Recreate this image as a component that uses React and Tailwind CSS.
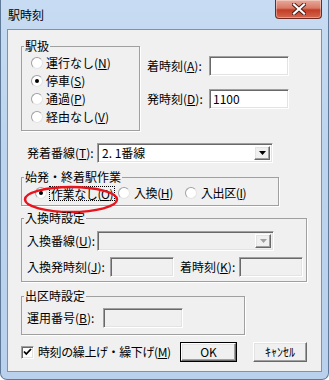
import React from 'react';

const sunken = "border border-t-[#a0a0a0] border-l-[#a0a0a0] border-b-white border-r-white shadow-[inset_1px_1px_0_#696969,inset_-1px_-1px_0_#e3e3e3]";
const raised = "border border-t-white border-l-white border-b-[#696969] border-r-[#696969] shadow-[inset_-1px_-1px_0_#a0a0a0,inset_1px_1px_0_#e3e3e3]";

const Key = ({ k }) => <span className="underline underline-offset-[1px]">{k}</span>;

const Radio = ({ checked }) => (
  <span className="w-[12px] h-[12px] shrink-0 rounded-full bg-white border border-t-[#a0a0a0] border-l-[#a0a0a0] border-b-[#e3e3e3] border-r-[#e3e3e3] flex items-center justify-center">
    {checked && <span className="w-[4px] h-[4px] rounded-full bg-black" />}
  </span>
);

const Field = ({ w, value, disabled }) => (
  <div className={`${w} h-[20px] ${sunken} ${disabled ? 'bg-[#f0f0f0]' : 'bg-white'} flex items-center pl-[3px] leading-none`}>
    {value}
  </div>
);

const Combo = ({ w, value, disabled }) => (
  <div className={`${w} h-[20px] ${sunken} ${disabled ? 'bg-[#f0f0f0]' : 'bg-white'} flex items-center p-[2px]`}>
    <span className="flex-1 pl-[2px] leading-none">{value}</span>
    <span className={`w-[16px] h-full ${raised} bg-[#f0f0f0] flex items-center justify-center`}>
      <svg width="7" height="4" viewBox="0 0 7 4">
        <path d="M0 0h7L3.5 4z" fill={disabled ? '#a0a0a0' : '#000'} />
      </svg>
    </span>
  </div>
);

const Group = ({ title, w, className = '', children }) => (
  <fieldset className={`${w} relative border border-[#a0a0a0] shadow-[1px_1px_0_#fff] ${className}`}>
    <legend className="ml-[2px] px-[1px] leading-[14px]">{title}</legend>
    {children}
  </fieldset>
);

const App = () => {
  return (
    <div className="w-[329px] h-[380px] bg-white font-['Noto_Sans_CJK_JP',sans-serif] text-[12px] text-black">
      <div className="w-full h-full flex flex-col rounded-b-[7px] border-x border-b border-[#5f7a99] bg-[linear-gradient(180deg,#c7dcf2_0%,#bcd4ee_40%,#b9d1ec_100%)]">
        {/* title bar */}
        <div className="h-[29px] flex items-start shrink-0">
          <span className="pl-[7px] pt-[8px] text-[12px] leading-[14px] text-black">駅時刻</span>
          <div className="ml-auto mr-[6px] w-[47px] h-[19px] rounded-b-[4px] border border-t-0 border-[#6d2a22] bg-[linear-gradient(180deg,#e9a99a_0%,#d77a66_45%,#c43c25_55%,#d3684f_100%)] flex items-center justify-center shadow-[inset_0_0_0_1px_rgba(255,255,255,0.35)]">
            <svg width="14" height="12" viewBox="0 0 14 12">
              <path d="M2 1.5L12 10.5M12 1.5L2 10.5" stroke="#4a1a14" strokeWidth="4" strokeLinecap="square" />
              <path d="M2 1.5L12 10.5M12 1.5L2 10.5" stroke="#fff" strokeWidth="2.2" strokeLinecap="square" />
            </svg>
          </div>
        </div>

        {/* client area */}
        <div className="mx-[6px] h-[343px] border border-[#7d93ad] bg-[#f0f0f0] flex flex-col pl-[13px]">
          {/* station handling + times */}
          <div className="flex items-start mt-[9px]">
            <Group title="駅扱" w="w-[119px]">
              <div className="pt-[1px] pb-[4px] flex flex-col">
                {[
                  ['運行なし', 'N', false],
                  ['停車', 'S', true],
                  ['通過', 'P', false],
                  ['経由なし', 'V', false],
                ].map(([t, k, c]) => (
                  <div key={k} className="h-[18px] flex items-center pl-[9px] gap-[3px]">
                    <Radio checked={c} />
                    <span className="whitespace-nowrap">{t}(<Key k={k} />)</span>
                  </div>
                ))}
              </div>
            </Group>
            <div className="ml-[7px] pt-[17px] flex flex-col gap-[13px]">
              <div className="flex items-center">
                <span className="w-[62px]">着時刻(<Key k="A" />):</span>
                <Field w="w-[80px]" />
              </div>
              <div className="flex items-center">
                <span className="w-[62px]">発時刻(<Key k="D" />):</span>
                <Field w="w-[80px]" value="1100" />
              </div>
            </div>
          </div>

          {/* track */}
          <div className="mt-[12px] flex items-center pl-[6px]">
            <span className="w-[70px]">発着番線(<Key k="T" />):</span>
            <Combo w="w-[176px]" value="2. 1番線" />
          </div>

          {/* origin / terminal work */}
          <Group title="始発・終着駅作業" w="w-[258px]" className="mt-[7px]">
            <div className="h-[18px] mb-[3px] flex items-center pl-[13px] tracking-[-0.4px]">
              <div className="w-[83px] min-w-0 shrink-0 flex items-center gap-[3px]">
                <Radio checked />
                <span className="whitespace-nowrap outline outline-1 outline-dotted outline-black leading-[13px] px-[1px]">作業なし(<Key k="O" />)</span>
              </div>
              <div className="w-[67px] min-w-0 shrink-0 flex items-center gap-[4px]">
                <Radio />
                <span className="whitespace-nowrap">入換(<Key k="H" />)</span>
              </div>
              <div className="flex items-center gap-[4px]">
                <Radio />
                <span className="whitespace-nowrap">入出区(<Key k="I" />)</span>
              </div>
            </div>
            <svg className="absolute left-[2px] top-[2px] overflow-visible" width="94" height="27" viewBox="0 0 94 27">
              <ellipse cx="47" cy="13.5" rx="46" ry="12.5" fill="none" stroke="#e8141c" strokeWidth="2.5" />
            </svg>
          </Group>

          {/* shunting settings */}
          <Group title="入換時設定" w="w-[286px]" className="mt-[5px]">
            <div className="pt-[6px] pb-[4px] pl-[5px] flex flex-col gap-[6px]">
              <div className="flex items-center">
                <span className="w-[70px]">入換番線(<Key k="U" />):</span>
                <Combo w="w-[177px]" disabled />
              </div>
              <div className="flex items-center">
                <span className="w-[83px]">入換発時刻(<Key k="J" />):</span>
                <Field w="w-[64px]" disabled />
                <span className="w-[59px] ml-[6px]">着時刻(<Key k="K" />):</span>
                <Field w="w-[64px]" disabled />
              </div>
            </div>
          </Group>

          {/* depot departure */}
          <Group title="出区時設定" w="w-[224px]" className="mt-[7px]">
            <div className="pt-[5px] pb-[6px] pl-[5px] flex items-center">
              <span className="w-[76px]">運用番号(<Key k="B" />):</span>
              <Field w="w-[80px]" disabled />
            </div>
          </Group>

          {/* bottom row */}
          <div className="mt-[7px] h-[20px] flex items-center">
            <div className="w-[159px] flex items-center gap-[4px]">
              <span className={`w-[13px] h-[13px] bg-white ${sunken} flex items-center justify-center`}>
                <svg width="9" height="8" viewBox="0 0 9 8">
                  <path d="M1 3.5L3.3 6L8 1" fill="none" stroke="#000" strokeWidth="1.8" />
                </svg>
              </span>
              <span className="whitespace-nowrap tracking-[-0.4px]">時刻の繰上げ・繰下げ(<Key k="M" />)</span>
            </div>
            <button className="w-[57px] h-[20px] border border-black bg-[#f0f0f0]">
              <span className={`w-full h-full ${raised} flex items-center justify-center leading-none`}>OK</span>
            </button>
            <button className={`ml-[16px] w-[54px] h-[20px] ${raised} bg-[#f0f0f0] flex items-center justify-center leading-none whitespace-nowrap`}>
              ｷｬﾝｾﾙ
            </button>
          </div>
        </div>
      </div>
    </div>
  );
};

export default App;
